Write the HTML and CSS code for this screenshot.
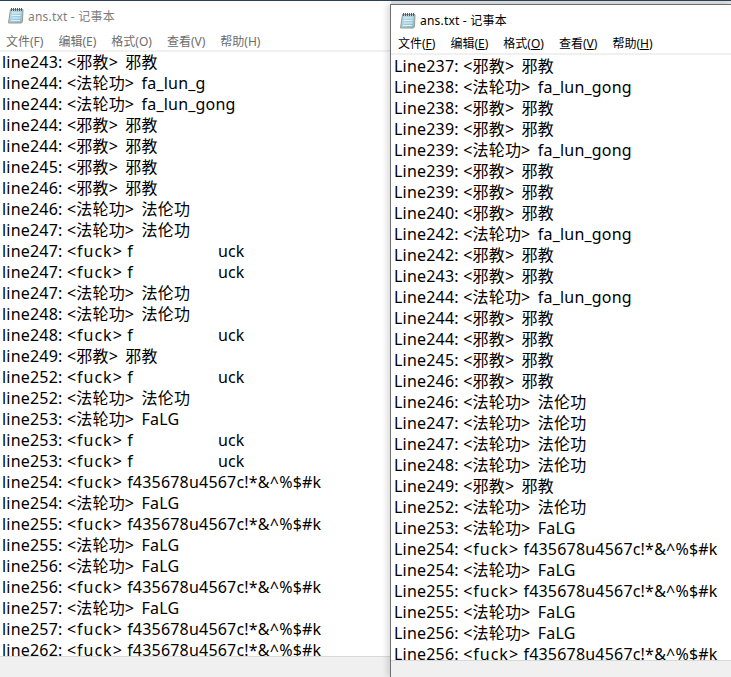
FILE: index.html
```html
<!DOCTYPE html>
<html lang="zh">
<head>
<meta charset="utf-8">
<title>ans.txt - 记事本</title>
<link rel="stylesheet" href="styles.css">
</head>
<body>
<svg class="defs" width="0" height="0">
  <defs>
    <linearGradient id="page" x1="0" y1="0" x2="1" y2="1"><stop offset="0" stop-color="#c4e3ef"/><stop offset="1" stop-color="#7fb8cf"/></linearGradient>
    <symbol id="notepad" viewBox="0 0 17 17">
      <path d="M3.500 2.500h12.500l-.5 12-1 1.500H1.500z" fill="url(#page)" stroke="#9a9a8e"/>
      <path d="M5 6h9M4.500 8.500h9M4.500 11h9M4 13.500h9" stroke="#e2f1f6"/>
      <path d="M4.500 1v3M6.500 1v3M8.500 1v3M10.500 1v3M12.500 1v3M14.500 1v3" stroke="#4d5a60"/>
    </symbol>
  </defs>
</svg>
<section class="window back">
  <header class="title"><svg class="icon" width="17" height="17"><use href="#notepad"/></svg><span>ans.txt - 记事本</span></header>
  <nav class="menu"><span>文件(F)</span><span>编辑(E)</span><span>格式(O)</span><span>查看(V)</span><span>帮助(H)</span></nav>
  <main class="text">
    <div>line243: <span class="tag">&lt;邪教&gt;</span> 邪教</div>
    <div>line244: <span class="tag">&lt;法轮功&gt;</span> fa_lun_g</div>
    <div>line244: <span class="tag">&lt;法轮功&gt;</span> fa_lun_gong</div>
    <div>line244: <span class="tag">&lt;邪教&gt;</span> 邪教</div>
    <div>line244: <span class="tag">&lt;邪教&gt;</span> 邪教</div>
    <div>line245: <span class="tag">&lt;邪教&gt;</span> 邪教</div>
    <div>line246: <span class="tag">&lt;邪教&gt;</span> 邪教</div>
    <div>line246: <span class="tag">&lt;法轮功&gt;</span> 法伦功</div>
    <div>line247: <span class="tag">&lt;法轮功&gt;</span> 法伦功</div>
    <div>line247: <span class="tag en">&lt;fuck&gt;</span> f<i class="gap"></i>uck</div>
    <div>line247: <span class="tag en">&lt;fuck&gt;</span> f<i class="gap"></i>uck</div>
    <div>line247: <span class="tag">&lt;法轮功&gt;</span> 法伦功</div>
    <div>line248: <span class="tag">&lt;法轮功&gt;</span> 法伦功</div>
    <div>line248: <span class="tag en">&lt;fuck&gt;</span> f<i class="gap"></i>uck</div>
    <div>line249: <span class="tag">&lt;邪教&gt;</span> 邪教</div>
    <div>line252: <span class="tag en">&lt;fuck&gt;</span> f<i class="gap"></i>uck</div>
    <div>line252: <span class="tag">&lt;法轮功&gt;</span> 法伦功</div>
    <div>line253: <span class="tag">&lt;法轮功&gt;</span> FaLG</div>
    <div>line253: <span class="tag en">&lt;fuck&gt;</span> f<i class="gap"></i>uck</div>
    <div>line253: <span class="tag en">&lt;fuck&gt;</span> f<i class="gap"></i>uck</div>
    <div>line254: <span class="tag en">&lt;fuck&gt;</span> f435678u4567c!*&amp;^%$#k</div>
    <div>line254: <span class="tag">&lt;法轮功&gt;</span> FaLG</div>
    <div>line255: <span class="tag en">&lt;fuck&gt;</span> f435678u4567c!*&amp;^%$#k</div>
    <div>line255: <span class="tag">&lt;法轮功&gt;</span> FaLG</div>
    <div>line256: <span class="tag">&lt;法轮功&gt;</span> FaLG</div>
    <div>line256: <span class="tag en">&lt;fuck&gt;</span> f435678u4567c!*&amp;^%$#k</div>
    <div>line257: <span class="tag">&lt;法轮功&gt;</span> FaLG</div>
    <div>line257: <span class="tag en">&lt;fuck&gt;</span> f435678u4567c!*&amp;^%$#k</div>
    <div>line262: <span class="tag en">&lt;fuck&gt;</span> f435678u4567c!*&amp;^%$#k</div>
  </main>
  <footer class="status"></footer>
</section>
<section class="window front">
  <header class="title"><svg class="icon" width="17" height="17"><use href="#notepad"/></svg><span>ans.txt - 记事本</span></header>
  <nav class="menu"><span>文件(<u>F</u>)</span><span>编辑(<u>E</u>)</span><span>格式(<u>O</u>)</span><span>查看(<u>V</u>)</span><span>帮助(<u>H</u>)</span></nav>
  <main class="text">
    <div>Line237: <span class="tag">&lt;邪教&gt;</span> 邪教</div>
    <div>Line238: <span class="tag">&lt;法轮功&gt;</span> fa_lun_gong</div>
    <div>Line238: <span class="tag">&lt;邪教&gt;</span> 邪教</div>
    <div>Line239: <span class="tag">&lt;邪教&gt;</span> 邪教</div>
    <div>Line239: <span class="tag">&lt;法轮功&gt;</span> fa_lun_gong</div>
    <div>Line239: <span class="tag">&lt;邪教&gt;</span> 邪教</div>
    <div>Line239: <span class="tag">&lt;邪教&gt;</span> 邪教</div>
    <div>Line240: <span class="tag">&lt;邪教&gt;</span> 邪教</div>
    <div>Line242: <span class="tag">&lt;法轮功&gt;</span> fa_lun_gong</div>
    <div>Line242: <span class="tag">&lt;邪教&gt;</span> 邪教</div>
    <div>Line243: <span class="tag">&lt;邪教&gt;</span> 邪教</div>
    <div>Line244: <span class="tag">&lt;法轮功&gt;</span> fa_lun_gong</div>
    <div>Line244: <span class="tag">&lt;邪教&gt;</span> 邪教</div>
    <div>Line244: <span class="tag">&lt;邪教&gt;</span> 邪教</div>
    <div>Line245: <span class="tag">&lt;邪教&gt;</span> 邪教</div>
    <div>Line246: <span class="tag">&lt;邪教&gt;</span> 邪教</div>
    <div>Line246: <span class="tag">&lt;法轮功&gt;</span> 法伦功</div>
    <div>Line247: <span class="tag">&lt;法轮功&gt;</span> 法伦功</div>
    <div>Line247: <span class="tag">&lt;法轮功&gt;</span> 法伦功</div>
    <div>Line248: <span class="tag">&lt;法轮功&gt;</span> 法伦功</div>
    <div>Line249: <span class="tag">&lt;邪教&gt;</span> 邪教</div>
    <div>Line252: <span class="tag">&lt;法轮功&gt;</span> 法伦功</div>
    <div>Line253: <span class="tag">&lt;法轮功&gt;</span> FaLG</div>
    <div>Line254: <span class="tag en">&lt;fuck&gt;</span> f435678u4567c!*&amp;^%$#k</div>
    <div>Line254: <span class="tag">&lt;法轮功&gt;</span> FaLG</div>
    <div>Line255: <span class="tag en">&lt;fuck&gt;</span> f435678u4567c!*&amp;^%$#k</div>
    <div>Line255: <span class="tag">&lt;法轮功&gt;</span> FaLG</div>
    <div>Line256: <span class="tag">&lt;法轮功&gt;</span> FaLG</div>
    <div>Line256: <span class="tag en">&lt;fuck&gt;</span> f435678u4567c!*&amp;^%$#k</div>
  </main>
  <footer class="status"></footer>
</section>
</body>
</html>
```
FILE: styles.css
```css
html, body {
  margin: 0;
  height: 100%;
  overflow: hidden;
}
html { background: #fff; }
body {
  position: relative;
  width: 731px;
  height: 676px;
  border-top: 1px solid #2b4059;
  background: #dfe1e0;
  font-family: "Noto Sans", "Noto Sans CJK SC", sans-serif;
  color: #000;
}
.defs { position: absolute; }
.window {
  position: absolute;
  background: #fff;
  display: flex;
  flex-direction: column;
  box-sizing: border-box;
}
.back {
  left: 0;
  top: 0;
  width: 391px;
  height: 676px;
}
.front {
  left: 390px;
  top: 3px;
  width: 341px;
  height: 673px;
  border-left: 1px solid #6e6e6e;
  border-top: 1px solid #6e6e6e;
  box-shadow: -3px 0 6px rgba(0, 0, 0, 0.14);
}
.title {
  flex: none;
  display: flex;
  align-items: center;
  gap: 4px;
  font-size: 12px;
  letter-spacing: 0.2px;
}
.back .title {
  height: 29px;
  padding-left: 7px;
  color: #808080;
}
.front .title {
  height: 26px;
  padding: 2px 0 0 8px;
}
.icon { flex: none; }
.menu {
  flex: none;
  display: flex;
  gap: 15px;
  align-items: center;
  font-size: 12px;
  border-bottom: 2px solid #f0f0f0;
}
.back .menu {
  height: 18px;
  padding: 2px 0 0 6px;
  color: #6d6d6d;
}
.front .menu {
  height: 20px;
  padding-left: 7px;
}
.text {
  flex: 1;
  min-height: 0;
  overflow: hidden;
  font-size: 16px;
  line-height: 21px;
  letter-spacing: 0.2px;
  white-space: nowrap;
}
.back .text { padding-left: 2px; }
.front .text { padding: 1px 0 0 3px; }
.tag { padding-right: 3px; }
.tag.en { padding-right: 0; letter-spacing: 1px; }
.gap {
  display: inline-block;
  width: 85px;
}
.status {
  flex: none;
  background: #f0f0f0;
  border-top: 1px solid #d9d9d9;
}
.back .status { height: 20px; }
.front .status { height: 16px; }
```
